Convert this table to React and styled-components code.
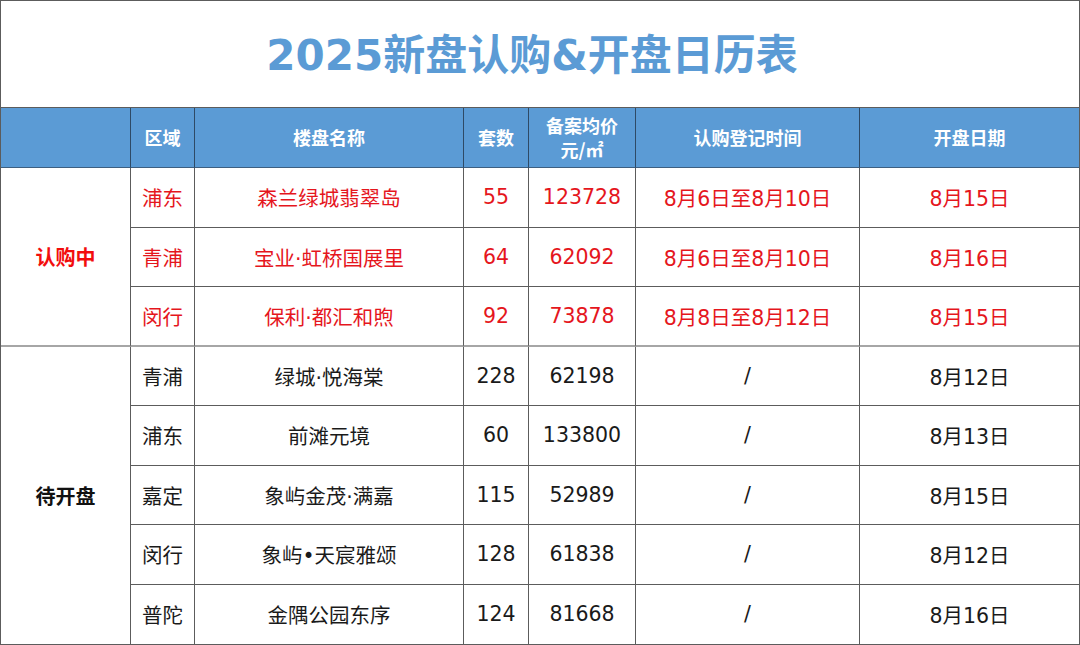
import React from "react";
import styled, { createGlobalStyle } from "styled-components";

const Global = createGlobalStyle`
  html, body { margin: 0; padding: 0; background: #fff; }
  body { font-family: "DejaVu Sans", "Noto Sans CJK SC", sans-serif; }
  * { box-sizing: border-box; }
`;

const LINE = "#5c5c5c";
const BLUE = "#5b9bd5";
const RED = "#e5161d";

const Frame = styled.div`
  width: 1080px;
  height: 645px;
  border: 1px solid ${LINE};
  display: flex;
  flex-direction: column;
`;

const Title = styled.h1`
  margin: 0;
  height: 107px;
  flex: none;
  border-bottom: 1px solid ${LINE};
  display: flex;
  align-items: center;
  justify-content: center;
  color: ${BLUE};
  font-family: "DejaVu Sans", "Noto Sans CJK SC", sans-serif;
  font-weight: 700;
  font-size: 42px;
  padding: 0 16px 6px 0;
`;

const Grid = styled.div`
  flex: 1;
  display: grid;
  grid-template-columns: 130px 64px 269px 65px 107px 224px 1fr;
  grid-template-rows: 60px repeat(8, 1fr);
`;

const HeadCell = styled.div`
  background: ${BLUE};
  color: #fff;
  font-family: "Noto Sans CJK SC", sans-serif;
  font-weight: 700;
  font-size: 18px;
  line-height: 24px;
  display: flex;
  flex-direction: column;
  align-items: center;
  justify-content: center;
  text-align: center;
  border-bottom: 1px solid #3d5f80;
  border-right: ${(p) => (p.$last ? "none" : "1px solid #2e4a66")};
  padding-bottom: 2px;
`;

const Cell = styled.div`
  display: flex;
  align-items: center;
  justify-content: center;
  font-size: 20.5px;
  color: ${(p) => (p.$red ? RED : "#1a1a1a")};
  border-right: ${(p) => (p.$last ? "none" : `1px solid ${LINE}`)};
  border-bottom: ${(p) =>
    p.$bottom ? "none" : p.$divider ? "2px solid #a6a6a6" : `1px solid ${LINE}`};
  white-space: nowrap;
`;

const GroupCell = styled(Cell)`
  grid-row: span ${(p) => p.$span};
  font-family: "Noto Sans CJK SC", sans-serif;
  font-weight: 700;
  font-size: 20px;
  color: ${(p) => (p.$red ? "#f20d0d" : "#111")};
`;

const groups = [
  {
    name: "认购中",
    red: true,
    rows: [
      ["浦东", "森兰绿城翡翠岛", "55", "123728", "8月6日至8月10日", "8月15日"],
      ["青浦", "宝业·虹桥国展里", "64", "62092", "8月6日至8月10日", "8月16日"],
      ["闵行", "保利·都汇和煦", "92", "73878", "8月8日至8月12日", "8月15日"],
    ],
  },
  {
    name: "待开盘",
    red: false,
    rows: [
      ["青浦", "绿城·悦海棠", "228", "62198", "/", "8月12日"],
      ["浦东", "前滩元境", "60", "133800", "/", "8月13日"],
      ["嘉定", "象屿金茂·满嘉", "115", "52989", "/", "8月15日"],
      ["闵行", "象屿•天宸雅颂", "128", "61838", "/", "8月12日"],
      ["普陀", "金隅公园东序", "124", "81668", "/", "8月16日"],
    ],
  },
];

export default function App() {
  return (
    <>
      <Global />
      <Frame>
        <Title>2025新盘认购&amp;开盘日历表</Title>
        <Grid>
          <HeadCell />
          <HeadCell>区域</HeadCell>
          <HeadCell>楼盘名称</HeadCell>
          <HeadCell>套数</HeadCell>
          <HeadCell>
            <span>备案均价</span>
            <span>元/㎡</span>
          </HeadCell>
          <HeadCell>认购登记时间</HeadCell>
          <HeadCell $last>开盘日期</HeadCell>
          {groups.map((g, gi) => {
            const lastGroup = gi === groups.length - 1;
            return (
              <React.Fragment key={g.name}>
                <GroupCell
                  $span={g.rows.length}
                  $red={g.red}
                  $divider={!lastGroup}
                  $bottom={lastGroup}
                >
                  {g.name}
                </GroupCell>
                {g.rows.map((r, ri) => {
                  const lastRow = ri === g.rows.length - 1;
                  return r.map((v, ci) => (
                    <Cell
                      key={`${gi}-${ri}-${ci}`}
                      $red={g.red}
                      $last={ci === r.length - 1}
                      $divider={lastRow && !lastGroup}
                      $bottom={lastRow && lastGroup}
                    >
                      {v}
                    </Cell>
                  ));
                })}
              </React.Fragment>
            );
          })}
        </Grid>
      </Frame>
    </>
  );
}
